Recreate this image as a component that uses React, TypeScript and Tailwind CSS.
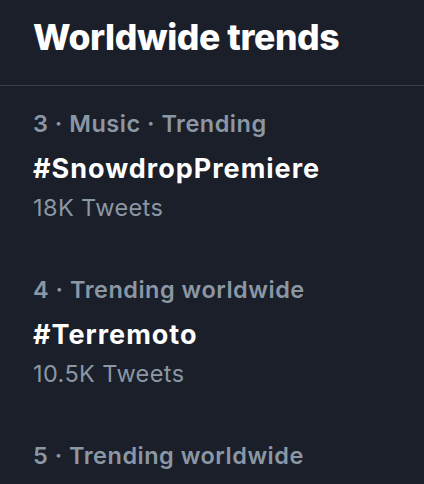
const trends = [
  { meta: '3 · Music · Trending', name: '#SnowdropPremiere', count: '18K Tweets' },
  { meta: '4 · Trending worldwide', name: '#Terremoto', count: '10.5K Tweets' },
  { meta: '5 · Trending worldwide', name: '#WorldCup', count: '12.1K Tweets' },
];

export default function App() {
  return (
    <div
      className="h-[484px] w-[424px] overflow-hidden bg-[#1a1f29] text-white"
      style={{ fontFamily: 'Inter, "Noto Sans", sans-serif' }}
    >
      {/* Header */}
      <div className="h-[86px] border-b border-[#3a3f48] px-[33px] pt-[16px]">
        <h1 className="text-[35.5px] font-extrabold leading-[44px] tracking-[-0.4px]">Worldwide trends</h1>
      </div>

      {/* Trend rows */}
      {trends.map((t) => (
        <div key={t.name} className="px-[33px] pt-[22px] pb-[28px]">
          <p className="text-[23.5px] font-semibold leading-[32px] tracking-[0.5px] text-[#8b97a5]">{t.meta}</p>
          <p className="mt-[13px] text-[27px] font-bold leading-[32px] tracking-[1px] text-white">{t.name}</p>
          <p className="mt-[7px] text-[23.5px] leading-[32px] tracking-[0.4px] text-[#8b97a5]">{t.count}</p>
        </div>
      ))}
    </div>
  );
}
